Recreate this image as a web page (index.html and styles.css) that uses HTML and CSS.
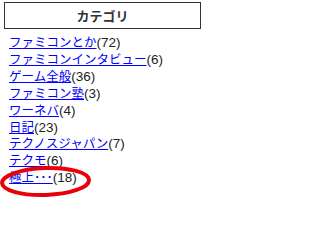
FILE: index.html
```html
<!DOCTYPE html>
<html lang="ja">
<head>
<meta charset="utf-8">
<link rel="stylesheet" href="styles.css">
</head>
<body>
<div class="widget">
  <h2 class="title">カテゴリ</h2>
  <ul class="cats">
    <li><a href="#">ファミコンとか</a>(72)</li>
    <li><a href="#">ファミコンインタビュー</a>(6)</li>
    <li><a href="#">ゲーム全般</a>(36)</li>
    <li><a href="#">ファミコン塾</a>(3)</li>
    <li><a href="#">ワーネバ</a>(4)</li>
    <li><a href="#">日記</a>(23)</li>
    <li><a href="#">テクノスジャパン</a>(7)</li>
    <li><a href="#">テクモ</a>(6)</li>
    <li><a href="#">極上･･･</a>(18)</li>
  </ul>
  <svg class="circle" width="96" height="34" viewBox="0 0 96 34">
    <ellipse cx="46.5" cy="16.5" rx="43.5" ry="13.5" fill="none" stroke="#e8000b" stroke-width="4" transform="rotate(-2 46.5 16.5)"/>
  </svg>
</div>
</body>
</html>
```
FILE: styles.css
```css
html, body {
  margin: 0;
  padding: 0;
  background: #fff;
}
.widget {
  position: relative;
  width: 205px;
  height: 200px;
  font-family: "Liberation Sans", "Noto Sans CJK JP", sans-serif;
}
.title {
  margin: 2px 4px 0 4px;
  width: 195px;
  height: 25px;
  border: 1px solid #333;
  font-size: 13px;
  font-weight: bold;
  color: #333;
  text-align: center;
  line-height: 25px;
  font-family: "Noto Sans CJK JP", sans-serif;
}
.cats {
  list-style: none;
  margin: 6px 0 0 0;
  padding: 0 0 0 9px;
  font-size: 13.5px;
  line-height: 16.9px;
  color: #222;
}
.cats a {
  color: #0000ff;
  text-decoration: underline;
  font-size: 12.5px;
}
.circle {
  position: absolute;
  left: -1px;
  top: 163px;
}
```
